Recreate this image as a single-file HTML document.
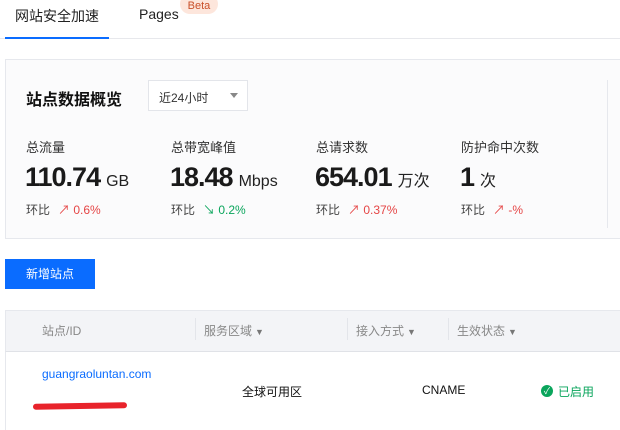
<!DOCTYPE html>
<html><head><meta charset="utf-8"><style>
*{margin:0;padding:0;box-sizing:border-box}
body{width:620px;height:430px;overflow:hidden;background:#fff;font-family:"Liberation Sans","Noto Sans CJK SC",sans-serif;position:relative;color:#1f1f1f}
.a{position:absolute;white-space:nowrap}
.lbl{font-size:13px;color:#333;top:137px}
.val{font-size:27px;font-weight:bold;top:162px;color:#1a1a1a;letter-spacing:-1px}
.val span{font-size:16px;font-weight:normal;letter-spacing:0;margin-left:6px;color:#222}
.hb{font-size:12px;color:#444;top:201px}
.hb b{font-weight:normal;margin-left:8px}
.up{color:#e54545}.dn{color:#0aa55c}
.th{font-size:12px;color:#888;top:322px}
.th i{font-style:normal;font-size:9px;color:#777;margin-left:3px}
.sep{position:absolute;top:318px;width:1px;height:22px;background:#e3e5ea}
</style></head><body>
<div class="a" style="left:15px;top:6px;font-size:14px;color:#222">网站安全加速</div>
<div class="a" style="left:139px;top:6px;font-size:14px;color:#222">Pages</div>
<div class="a" style="left:180px;top:-6px;width:38px;height:20px;border-radius:10px;background:#fde6dc;color:#c9502a;font-size:11px;text-align:center;line-height:24px">Beta</div>
<div class="a" style="left:0;top:38px;width:620px;height:1px;background:#e7e8ec"></div>
<div class="a" style="left:5px;top:37px;width:104px;height:2px;background:#0a6cff"></div>

<div class="a" style="left:5px;top:59px;width:630px;height:180px;background:#fbfbfc;border:1px solid #e6e8ed"></div>
<div class="a" style="left:607px;top:80px;width:1px;height:148px;background:#e6e8ed"></div>
<div class="a" style="left:26px;top:86px;font-size:16px;font-weight:bold;color:#111">站点数据概览</div>
<div class="a" style="left:148px;top:80px;width:100px;height:31px;border:1px solid #e3e5ea;background:#fff;font-size:12px;color:#333;padding:8px 0 0 10px">近24小时</div>
<div class="a" style="left:230px;top:93px;width:0;height:0;border-left:4px solid transparent;border-right:4px solid transparent;border-top:5px solid #888"></div>

<div class="a lbl" style="left:26px">总流量</div>
<div class="a lbl" style="left:171px">总带宽峰值</div>
<div class="a lbl" style="left:316px">总请求数</div>
<div class="a lbl" style="left:461px">防护命中次数</div>
<div class="a val" style="left:25px">110.74<span>GB</span></div>
<div class="a val" style="left:170px">18.48<span>Mbps</span></div>
<div class="a val" style="left:315px">654.01<span>万次</span></div>
<div class="a val" style="left:460px">1<span>次</span></div>
<div class="a hb" style="left:26px">环比<b class="up">↗ 0.6%</b></div>
<div class="a hb" style="left:171px">环比<b class="dn">↘ 0.2%</b></div>
<div class="a hb" style="left:316px">环比<b class="up">↗ 0.37%</b></div>
<div class="a hb" style="left:461px">环比<b class="up">↗ -%</b></div>

<div class="a" style="left:5px;top:259px;width:90px;height:30px;background:#0a6cff;color:#fff;font-size:12px;text-align:center;line-height:30px">新增站点</div>

<div class="a" style="left:5px;top:310px;width:620px;height:42px;background:#f3f4f7;border:1px solid #e6e8ed;border-bottom-color:#e0e2e7"></div>
<div class="a" style="left:5px;top:352px;width:1px;height:78px;background:#e6e8ed"></div>
<div class="sep" style="left:195px"></div><div class="sep" style="left:347px"></div><div class="sep" style="left:448px"></div>
<div class="a th" style="left:42px">站点/ID</div>
<div class="a th" style="left:204px">服务区域<i>▼</i></div>
<div class="a th" style="left:356px">接入方式<i>▼</i></div>
<div class="a th" style="left:457px">生效状态<i>▼</i></div>
<div class="a" style="left:42px;top:367px;font-size:12px;color:#0a6cff">guangraoluntan.com</div>
<div class="a" style="left:33px;top:403px;width:94px;height:6px;background:#e8232b;border-radius:3px;transform:rotate(-1deg)"></div>
<div class="a" style="left:242px;top:383px;font-size:12px;color:#111">全球可用区</div>
<div class="a" style="left:422px;top:383px;font-size:12px;color:#111">CNAME</div>
<div class="a" style="left:541px;top:385px;width:12px;height:12px;border-radius:50%;background:#0aa55c;color:#fff;font-size:9px;text-align:center;line-height:12px">✓</div>
<div class="a" style="left:558px;top:383px;font-size:12px;color:#0aa55c">已启用</div>
</body></html>
